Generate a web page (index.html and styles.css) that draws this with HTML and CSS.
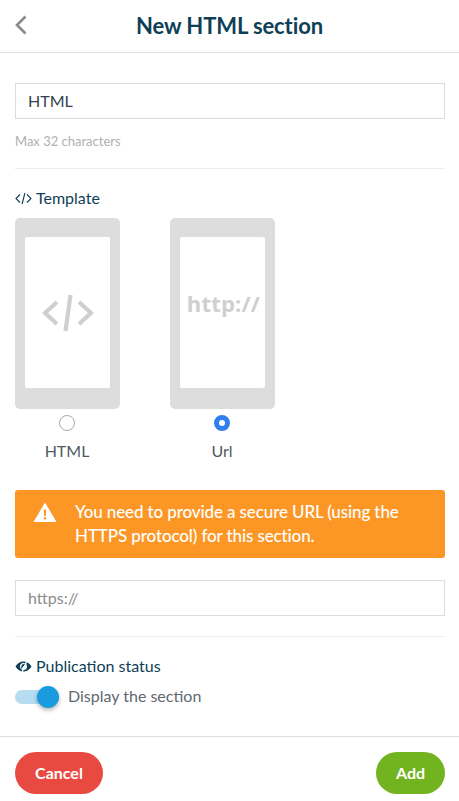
FILE: index.html
```html
<!DOCTYPE html>
<html lang="en">
<head>
<meta charset="utf-8">
<title>New HTML section</title>
<link rel="stylesheet" href="styles.css">
</head>
<body>
<div class="page">
  <header class="topbar">
    <svg class="back" width="12" height="20" viewBox="0 0 12 20"><path d="M10.500 1.500 2 10l8.500 8.500" fill="none" stroke="#8a8a8a" stroke-width="2.600"/></svg>
    <h1 class="title">New HTML section</h1>
  </header>
  <main class="content">
    <div class="field">HTML</div>
    <p class="hint">Max 32 characters</p>
    <hr class="rule rule-first">
    <div class="section-label">
      <svg class="label-icon" width="17" height="13" viewBox="0 0 17 13"><path d="M5 2.500 1 6.500l4 4M12 2.500l4 4-4 4M9.900 1 7.100 12" fill="none" stroke="#0f3f56" stroke-width="1.100"/></svg>
      <span>Template</span>
    </div>
    <div class="templates">
      <div class="template">
        <div class="phone">
          <div class="screen">
            <svg class="code-icon" width="52" height="38" viewBox="0 0 52 38"><path d="M15 8 3 19l12 11M37 8l12 11-12 11M28.500 1 23.500 37" fill="none" stroke="#cfcfcf" stroke-width="4.200"/></svg>
          </div>
        </div>
        <span class="radio"></span>
        <span class="template-name">HTML</span>
      </div>
      <div class="template">
        <div class="phone">
          <div class="screen">
            <span class="http">http://</span>
          </div>
        </div>
        <span class="radio radio-on"></span>
        <span class="template-name">Url</span>
      </div>
    </div>
    <div class="alert">
      <svg class="alert-icon" width="24" height="20" viewBox="0 0 24 20"><path fill-rule="evenodd" d="M12 .5 23.500 20H.5ZM10.800 7.500l.4 6.500h1.600l.4-6.500ZM12 15a1.300 1.300 0 1 0 0 2.600 1.300 1.300 0 0 0 0-2.600Z" fill="#fff"/></svg>
      <p class="alert-text">You need to provide a secure URL (using the HTTPS protocol) for this section.</p>
    </div>
    <div class="field field-placeholder">https://</div>
    <hr class="rule rule-second">
    <div class="section-label section-label-status">
      <svg class="label-icon" width="17" height="13" viewBox="0 0 17 13"><path fill-rule="evenodd" d="M.5 6.500C2.500 3.300 5.300 1.500 8.500 1.500s6 1.800 8 5c-2 3.200-4.800 5-8 5s-6-1.800-8-5Zm8-3.500a3.500 3.500 0 1 0 0 7 3.500 3.500 0 0 0 0-7Z" fill="#0f3f56"/><path d="M7 4.500 5.500 9.500 11 3.500Z" fill="#0f3f56"/><path d="M12 .5 7 12.500" stroke="#fff" stroke-width="1.300"/></svg>
      <span>Publication status</span>
    </div>
    <div class="toggle-row">
      <span class="toggle"><span class="knob"></span></span>
      <span class="toggle-text">Display the section</span>
    </div>
  </main>
  <footer class="actions">
    <button class="btn btn-cancel" type="button">Cancel</button>
    <button class="btn btn-add" type="button">Add</button>
  </footer>
</div>
</body>
</html>
```
FILE: styles.css
```css
* { box-sizing: border-box; }
html, body { margin: 0; padding: 0; background: #fff; }
body { font-family: Lato, "Open Sans", sans-serif; color: #4f5a62; }
.page { width: 459px; height: 801px; overflow: hidden; display: flex; flex-direction: column; }
.topbar { height: 53px; flex: none; border-bottom: 1px solid #dddddd; position: relative; display: flex; align-items: center; justify-content: center; }
.back { position: absolute; left: 15px; top: 15px; }
.title { margin: 0 0 1px; font-size: 22px; font-weight: 700; line-height: 26px; color: #0f3f56; letter-spacing: -0.1px; }
.content { flex: 1; padding: 30px 14px 0 15px; display: flex; flex-direction: column; }
.field { height: 36px; border: 1px solid #dcdcdc; padding: 0 12px 1px; display: flex; align-items: center; font-size: 16px; color: #33424d; flex: none; }
.field-placeholder { margin-top: 22px; color: #8c8c8c; }
.hint { margin: 14px 0 0; font-size: 13px; line-height: 16px; color: #b0b0b0; }
.rule { margin: 0; border: 0; border-top: 1px solid #ececec; width: 100%; flex: none; }
.rule-first { margin-top: 19px; }
.rule-second { margin-top: 20px; }
.section-label { display: flex; align-items: center; gap: 4px; margin-top: 19px; height: 20px; font-size: 16px; line-height: 20px; color: #0f3f56; flex: none; }
.section-label-status { margin-top: 19px; }
.templates { display: flex; gap: 50px; margin-top: 10px; flex: none; }
.template { width: 105px; display: flex; flex-direction: column; align-items: center; }
.phone { width: 105px; height: 191px; background: #dddddd; border-radius: 5px; padding: 19px 10px 21px; }
.screen { width: 85px; height: 151px; background: #fff; border-radius: 2px; display: flex; justify-content: center; padding-top: 55px; }
.code-icon { flex: none; margin-top: 2px; }
.http { font-family: "Open Sans", sans-serif; font-weight: 700; font-size: 22px; line-height: 22px; letter-spacing: 0.2px; color: #cfcfcf; white-space: nowrap; margin-left: 2px; }
.radio { width: 16px; height: 16px; border: 1px solid #a9a9a9; border-radius: 50%; margin-top: 6px; margin-right: 1px; background: #fff; flex: none; }
.radio-on { border: 5px solid #2f80ed; }
.template-name { margin-top: 10px; margin-right: 1px; font-size: 16px; line-height: 20px; color: #4f5a62; }
.alert { height: 68px; margin-top: 29px; background: #fc9726; border-radius: 3px; padding: 10px 20px 0 18px; display: flex; gap: 18px; flex: none; }
.alert-icon { flex: none; margin-top: 2px; }
.alert-text { margin: 0; color: #fff; font-size: 17px; line-height: 24px; font-weight: 500; letter-spacing: -0.12px; }
.toggle-row { display: flex; align-items: center; margin-top: 8px; height: 24px; flex: none; }
.toggle { position: relative; width: 44px; height: 14px; background: #b5dcf0; border-radius: 7px; flex: none; margin-top: 2px; }
.knob { position: absolute; right: 0; top: -4px; width: 22px; height: 22px; background: #1a9be0; border-radius: 50%; box-shadow: 0 2px 4px rgba(0,0,0,.3); }
.toggle-text { margin-left: 9px; margin-bottom: 2px; font-size: 16px; color: #5f6870; }
.actions { height: 65px; flex: none; border-top: 1px solid #dddddd; padding: 15px 14px 0 15px; display: flex; justify-content: space-between; align-items: flex-start; }
.btn { height: 42px; border: 0; border-radius: 21px; color: #fff; font-family: Lato, sans-serif; font-size: 16px; font-weight: 700; padding: 0 0 2px; }
.btn-cancel { width: 88px; background: #e84a42; }
.btn-add { width: 69px; background: #72b41f; }
```
